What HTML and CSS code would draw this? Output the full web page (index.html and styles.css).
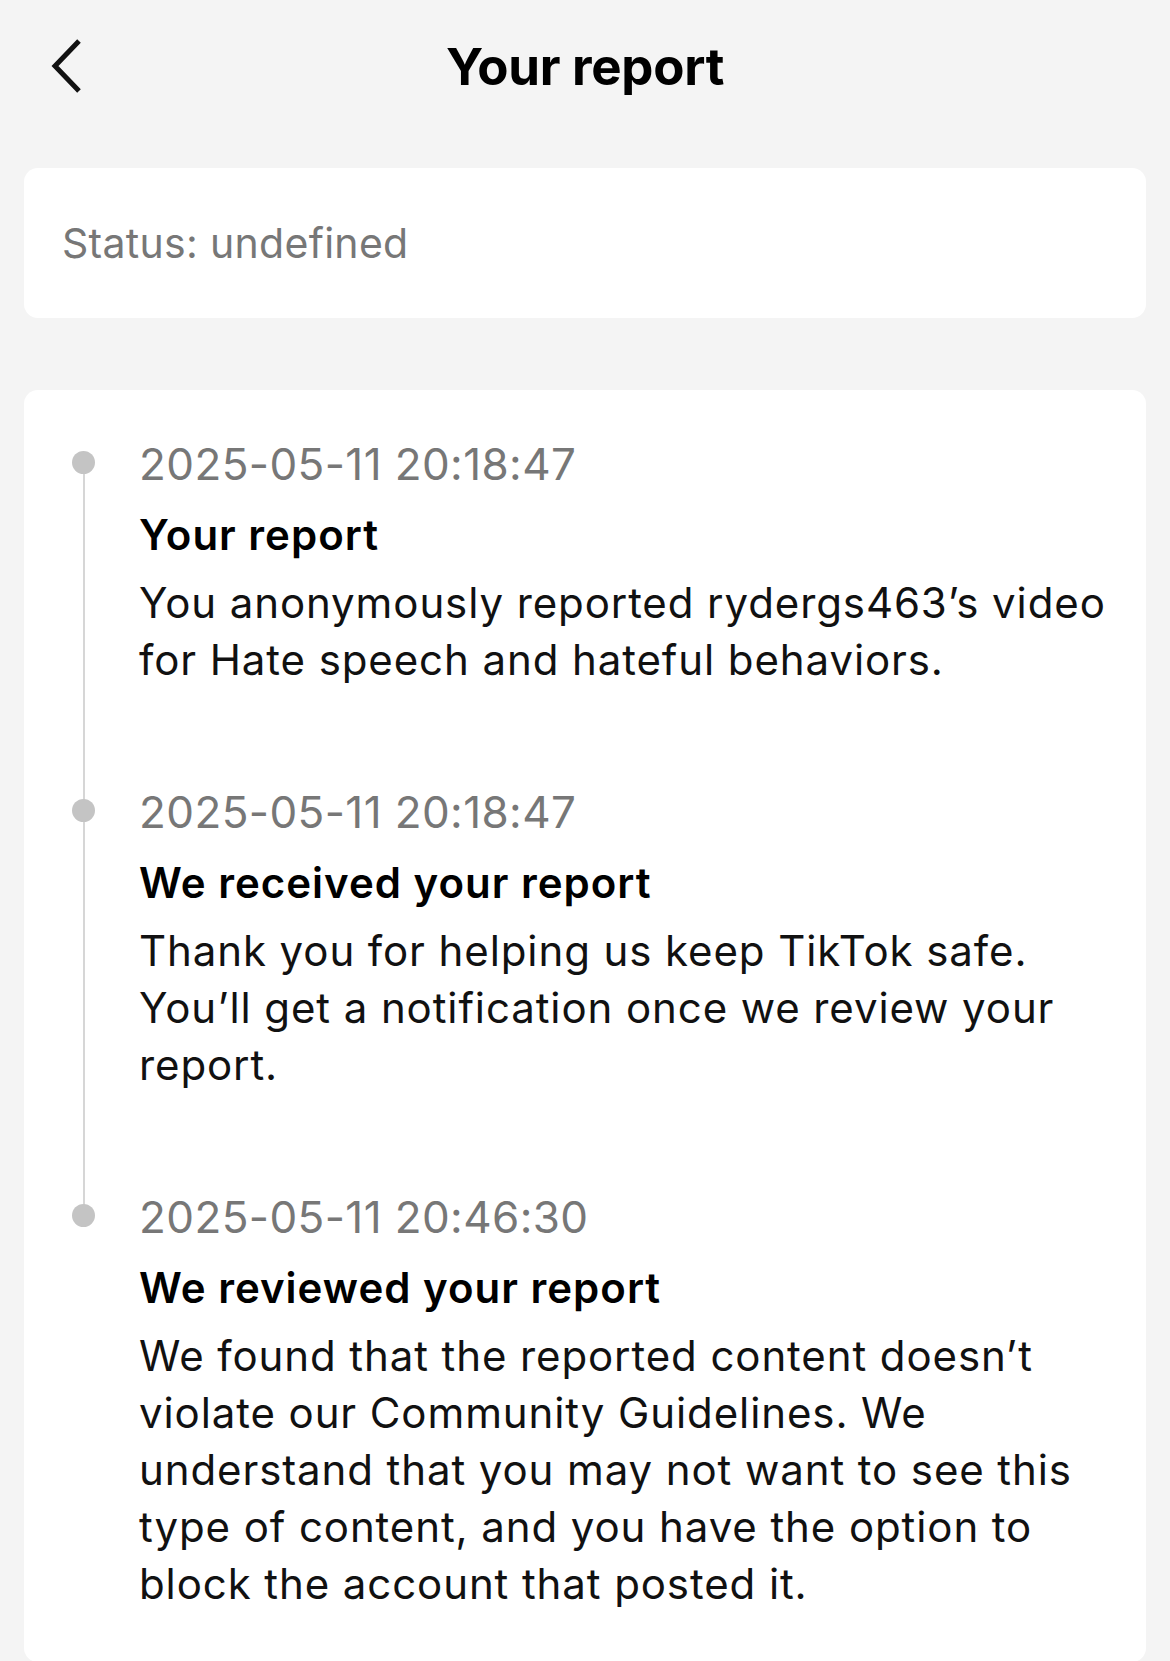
FILE: index.html
```html
<!DOCTYPE html>
<html lang="en">
<head>
  <meta charset="UTF-8" />
  <meta name="viewport" content="width=device-width, initial-scale=1.0" />
  <title>Your report</title>
  <link rel="stylesheet" href="styles.css">
</head>
<body>
  <div class="header">
    <button class="back" aria-label="Back">
      <svg width="36" height="56" viewBox="0 0 36 56">
        <path d="M31 3 L7 28 L31 53" fill="none" stroke="#111" stroke-width="5" />
      </svg>
    </button>
    <div class="title">Your report</div>
    <div></div>
  </div>

  <div class="status-box">Status: undefined</div>

  <div class="timeline-box">
    <div class="item">
      <div class="rail"><span class="dot"></span></div>
      <div class="content">
        <div class="date">2025-05-11 20:18:47</div>
        <div class="heading">Your report</div>
        <div class="text">You anonymously reported rydergs463’s video for Hate speech and hateful behaviors.</div>
      </div>
    </div>
    <div class="item">
      <div class="rail"><span class="dot"></span></div>
      <div class="content">
        <div class="date">2025-05-11 20:18:47</div>
        <div class="heading">We received your report</div>
        <div class="text">Thank you for helping us keep TikTok safe. You’ll get a notification once we review your report.</div>
      </div>
    </div>
    <div class="item">
      <div class="rail"><span class="dot"></span></div>
      <div class="content">
        <div class="date">2025-05-11 20:46:30</div>
        <div class="heading">We reviewed your report</div>
        <div class="text">We found that the reported content doesn’t violate our Community Guidelines. We understand that you may not want to see this type of content, and you have the option to block the account that posted it.</div>
      </div>
    </div>
  </div>
</body>
</html>
```

FILE: styles.css
```css
body {
  margin: 0;
  padding: 0 24px;
  font-family: Inter, 'Liberation Sans', sans-serif;
  background-color: #f4f4f4;
  color: #121212;
}

.header {
  height: 132px;
  display: grid;
  grid-template-columns: 1fr auto 1fr;
  align-items: center;
}

.back {
  justify-self: start;
  margin-left: 24px;
  padding: 0;
  border: none;
  background: none;
  display: flex;
  cursor: pointer;
}

.title {
  font-size: 51px;
  font-weight: 700;
  letter-spacing: -0.3px;
  color: #000;
}

.status-box {
  margin-top: 36px;
  height: 150px;
  display: flex;
  align-items: center;
  padding-left: 38px;
  background: #fff;
  border-radius: 14px;
  font-size: 41px;
  letter-spacing: 0.3px;
  color: #777;
}

.timeline-box {
  margin-top: 72px;
  padding: 46px 20px 50px 48px;
  background: #fff;
  border-radius: 14px;
}

.item {
  display: flex;
  position: relative;
  padding-bottom: 96px;
}

.item:last-child {
  padding-bottom: 0;
}

/* connector to the next dot */
.item::before {
  content: "";
  position: absolute;
  left: 10.5px;
  top: 27px;
  height: 100%;
  width: 2px;
  background: #d6d6d6;
}

.item:last-child::before {
  display: none;
}

.rail {
  width: 67px;
  flex-shrink: 0;
}

.dot {
  display: block;
  margin-top: 15px;
  width: 23px;
  height: 23px;
  border-radius: 50%;
  background: #c4c4c4;
  position: relative;
}

.content {
  max-width: 976px;
}

.date {
  font-size: 44px;
  line-height: 57px;
  letter-spacing: 0.4px;
  color: #777;
}

.heading {
  margin-top: 13px;
  font-size: 42px;
  line-height: 57px;
  font-weight: 600;
  letter-spacing: 1px;
  color: #000;
}

.text {
  margin-top: 11px;
  font-size: 42px;
  line-height: 57px;
  letter-spacing: 0.9px;
  color: #111;
}
```
